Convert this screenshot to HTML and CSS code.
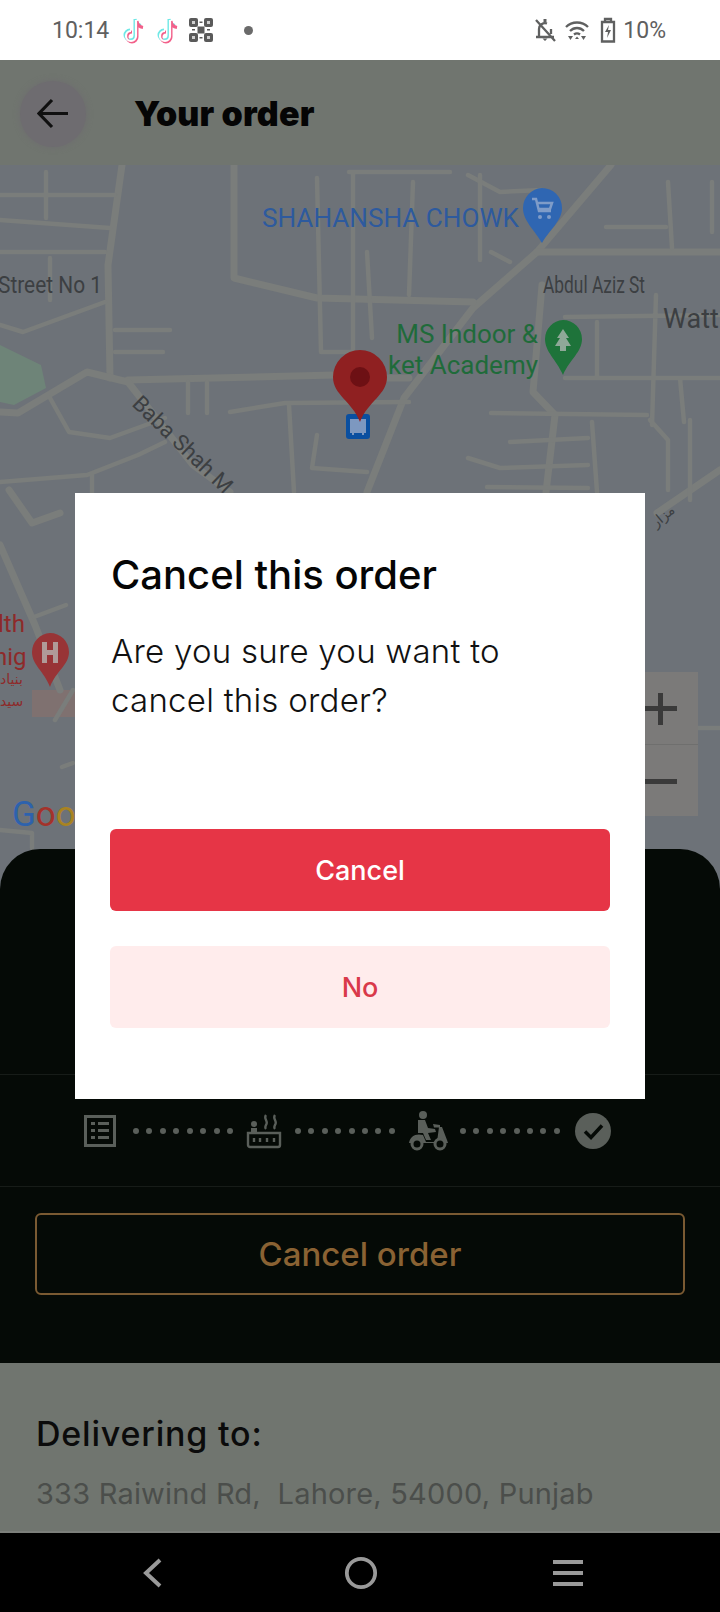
FILE: index.html
```html
<!DOCTYPE html>
<html lang="en">
<head>
<meta charset="utf-8">
<title>Your order</title>
<link rel="stylesheet" href="styles.css">
</head>
<body>
<div class="phone">
  <header class="status">
    <span class="time">10:14</span>
    <svg class="tt" viewBox="0 0 24 28"><path class="tt-c" d="M12 3v16a5 5 0 1 1-5-5M12 3c.5 4 3 6 6 6.500"/><path class="tt-p" d="M14 5v16a5 5 0 1 1-5-5M14 5c.5 4 3 6 6 6.500"/><path class="tt-w" d="M13 4v16a5 5 0 1 1-5-5"/></svg>
    <svg class="tt tt2" viewBox="0 0 24 28"><path class="tt-c" d="M12 3v16a5 5 0 1 1-5-5M12 3c.5 4 3 6 6 6.500"/><path class="tt-p" d="M14 5v16a5 5 0 1 1-5-5M14 5c.5 4 3 6 6 6.500"/><path class="tt-w" d="M13 4v16a5 5 0 1 1-5-5"/></svg>
    <svg class="qr" viewBox="0 0 24 24"><rect x="0" y="0" width="9" height="9" rx="2"/><rect x="15" y="0" width="9" height="9" rx="2"/><rect x="0" y="15" width="9" height="9" rx="2"/><rect x="15" y="15" width="9" height="9" rx="2"/><rect x="8.500" y="8.500" width="7" height="7"/><rect x="10.500" y="3.500" width="3" height="1.500"/><rect x="10.500" y="19" width="3" height="1.500"/><rect x="3" y="11" width="3" height="1.500"/><rect x="18" y="11" width="3" height="1.500"/><rect class="qr-i" x="3" y="3" width="3" height="3"/><rect class="qr-i" x="18" y="3" width="3" height="3"/><rect class="qr-i" x="3" y="18" width="3" height="3"/><rect class="qr-i" x="18" y="18" width="3" height="3"/></svg>
    <span class="dot"></span>
    <span class="grow"></span>
    <svg class="st-ic bell" viewBox="0 0 24 24"><path class="st-line" d="M3 19h18M6 19v-8a6 6 0 0 1 8-5.500M18 11v5M3 2l19 21"/><path class="st-fill" d="M9.500 20.500h5l-2.500 2.500zM10.500 1h3v3.500h-3z"/></svg>
    <svg class="st-ic wifi" viewBox="0 0 24 24"><path class="st-line" d="M1 9c6-6 16-6 22 0M5 13c4-4 10-4 14 0M9 16.500c2-1.500 4-1.500 6 0"/><path class="st-fill" d="M3 18h5l-2.500 4zM16 18h5l-2.500 4zM12 18.500l-2 2.500h4z"/></svg>
    <svg class="st-ic batt" viewBox="0 0 16 26"><path class="st-line" d="M2 5h12v19.500H2zM5 4V2h6v2"/><path class="st-fill" d="M9 8l-4 7h3l-1 6 4-8H8z"/></svg>
    <span class="pct">10%</span>
  </header>

  <div class="stage">
    <div class="appbar">
      <button class="back" aria-label="Back">
        <svg viewBox="0 0 32 32"><path d="M31 15.500H2M15 2L2 15.500 15 29"/></svg>
      </button>
      <h1>Your order</h1>
    </div>

    <div class="map">
      <svg viewBox="0 0 720 724" aria-label="Map">
        <g transform="translate(0 -165)">
          <path class="park" d="M0 345L41 365 46 388 14 405 0 402Z"/>
          <path class="pink" d="M32 690H75V717H32Z"/>
          <g class="roads wide">
            <path d="M611 165L537 252 473 308 404 398 367 492"/>
            <path d="M234 165V278L317 298 473 302"/>
            <path d="M537 252H720"/>
            <path d="M122 165L108 265 110 378"/>
            <path d="M128 380L335 375M387 378H409"/>
            <path d="M0 412L18 413 60 388 87 372 128 382 193 465 230 492"/>
            <path d="M542 285L533 392 555 415 546 492"/>
            <path d="M9 490L32 523 60 513"/>
            <path d="M0 545L35 625 60 690"/>
            <path d="M657 513L720 470"/>
          </g>
          <g class="roads">
            <path d="M0 195H115M0 220L110 228M0 252H105M46 172V218M50 258V300"/>
            <path d="M0 325L23 332 105 302M115 330H170M115 352H163"/>
            <path d="M50 398L69 432 110 438 165 418"/>
            <path d="M317 178L321 352H353M353 172V365M349 172H450M413 182L409 295M367 252L372 338"/>
            <path d="M468 175L500 192 542 190M491 252L510 262M606 227H666M668 182L672 248M712 182V232"/>
            <path d="M565 317L720 315M656 295L652 425M597 322V378M565 378H720M680 378L684 422"/>
            <path d="M491 413L647 415M592 422L597 492M510 442L588 438M468 458L500 468 588 465M487 487L588 488"/>
            <path d="M230 412L285 403 409 402M289 405L294 492M317 435L312 468 367 472M188 382V413M207 382V413"/>
            <path d="M0 482L87 475 138 455 165 442M92 475V495M480 175V260"/>
            <path d="M34 617L66 605M55 720L73 690M62 767L73 763M0 830L32 833V848M698 728H720"/>
            <path d="M650 420L668 440 668 490M690 420V500"/>
          </g>
          <text class="lbl blue" x="262" y="227" textLength="257" lengthAdjust="spacingAndGlyphs">SHAHANSHA CHOWK</text>
          <text class="lbl grey" x="-2" y="293" textLength="104" lengthAdjust="spacingAndGlyphs">Street No 1</text>
          <text class="lbl grey" x="543" y="293" textLength="102" lengthAdjust="spacingAndGlyphs">Abdul Aziz St</text>
          <text class="lbl grey watt" x="663" y="328">Watt</text>
          <text class="lbl green" x="538" y="343" text-anchor="end">MS Indoor &amp;</text>
          <text class="lbl green" x="538" y="374" text-anchor="end">ket Academy</text>
          <text class="lbl grey baba" transform="translate(131 405) rotate(44)">Baba Shah M</text>
          <text class="lbl red" x="-2" y="632">lth</text>
          <text class="lbl red" x="-6" y="665">hig</text>
          <text class="ur red" x="0" y="684">بنیاد</text>
          <text class="ur red" x="0" y="706">سید</text>
          <text class="ur grey" transform="translate(656 528) rotate(-40)">مزار</text>

          <path class="p-blue" d="M542 188a20 20 0 0 1 20 20c0 13-12 21-20 35-8-14-19-22-19-35a20 20 0 0 1 19-20z"/>
          <path class="p-ic" d="M532 199h4l3 12h12M537 203h15l-2 6h-11"/><circle class="p-dot" cx="540" cy="217" r="2"/><circle class="p-dot" cx="549" cy="217" r="2"/>
          <path class="p-green" d="M563 320a19 19 0 0 1 19 19c0 13-12 20-19 36-7-16-18-23-18-36a19 19 0 0 1 18-19z"/>
          <path class="p-tree" d="M563 329l6 9h-3l5 8h-5l0 5h-6v-5h-5l5-8h-3z"/>
          <path class="p-red2" d="M50 633a19 19 0 0 1 19 19c0 13-13 19-19 35-6-16-18-22-18-35a19 19 0 0 1 18-19z"/>
          <path class="p-h" d="M42 642h5v8h6v-8h5v21h-5v-8h-6v8h-5z"/>

          <rect class="bus" x="346" y="414" width="24" height="25" rx="3"/>
          <path class="bus-ic" d="M351 420h14v12h-14zM353 432v3M363 432v3"/>
          <path class="pin" d="M360 350a27 27 0 0 1 27 27c0 18-19 24-27 45-8-21-27-27-27-45a27 27 0 0 1 27-27z"/>
          <circle class="pin-d" cx="360" cy="377" r="10"/>

          <text class="goog"><tspan class="g1" x="12" y="826">G</tspan><tspan class="g2">o</tspan><tspan class="g3">o</tspan></text>
        </g>
      </svg>
      <div class="zoomctl">
        <span class="zbtn"><i class="zh"></i><i class="zv"></i></span>
        <span class="zbtn"><i class="zh"></i></span>
      </div>
    </div>

    <section class="sheet">
      <div class="rule first"></div>
      <div class="stepper">
        <svg class="s-list" viewBox="0 0 32 32"><path class="s-line" d="M1.500 1.500h29v29h-29z"/><path class="s-fill" d="M7 7h4v3H7zM14 7h11v3H14zM7 14h4v3H7zM14 14h11v3H14zM7 21h4v3H7zM14 21h11v3H14z"/></svg>
        <div class="dots"><i></i><i></i><i></i><i></i><i></i><i></i><i></i><i></i></div>
        <svg class="s-pot" viewBox="0 0 36 36"><path class="s-line thin" d="M2 20h32v12a2 2 0 0 1-2 2H4a2 2 0 0 1-2-2zM8 25v4M14 25v4M21 25v4M28 25v4M20 2c-3 4 3 6 0 10-1 2-1 3 0 4M29 2c-3 4 3 6 0 10-1 2-1 3 0 4"/><circle class="s-fill" cx="8" cy="11" r="3"/><path class="s-fill" d="M5 15h6v5H5z"/></svg>
        <div class="dots"><i></i><i></i><i></i><i></i><i></i><i></i><i></i><i></i></div>
        <svg class="s-ride" viewBox="0 0 40 40"><circle class="s-fill" cx="15" cy="4" r="4"/><path class="s-fill" d="M10 9h7l3 8 7 1 1 3-8 1 3 7h-5l-3-7h-5zM25 13l7 1v2.500h-6zM1 32c1-7 7-10 14-8l3 7h11l2-15h3l5 13 1 3H1z"/><circle class="s-ring" cx="9" cy="33" r="5"/><circle class="s-ring" cx="32" cy="33" r="5"/></svg>
        <div class="dots"><i></i><i></i><i></i><i></i><i></i><i></i><i></i><i></i></div>
        <svg class="s-check" viewBox="0 0 36 36"><circle class="s-fill" cx="18" cy="18" r="18"/><path class="s-tick" d="M10 18.500l6 6 11-12"/></svg>
      </div>
      <div class="rule"></div>
      <button class="btn-outline">Cancel order</button>
    </section>

    <section class="deliver">
      <h2>Delivering to:</h2>
      <p>333 Raiwind Rd,&nbsp; Lahore, 54000, Punjab</p>
    </section>

    <div class="dialog" role="dialog">
      <h3>Cancel this order</h3>
      <p>Are you sure you want to<br>cancel this order?</p>
      <button class="btn btn-primary">Cancel</button>
      <button class="btn btn-soft">No</button>
    </div>
  </div>

  <nav class="navbar">
    <svg class="n-back" viewBox="0 0 20 30"><path d="M17 2L3 15l14 13"/></svg>
    <svg class="n-home" viewBox="0 0 36 36"><circle cx="18" cy="18" r="15"/></svg>
    <svg class="n-menu" viewBox="0 0 34 26"><path d="M2 2h30M2 13h30M2 24h30"/></svg>
  </nav>
</div>
</body>
</html>
```
FILE: styles.css
```css
* { box-sizing: border-box; margin: 0; padding: 0; }
html, body { width: 720px; height: 1612px; overflow: hidden; }
body { font-family: "Inter", "Liberation Sans", sans-serif; background: #000; }
button { font: inherit; border: 0; background: none; }
.phone { width: 720px; height: 1612px; display: flex; flex-direction: column; }

/* status bar */
.status { height: 60px; background: #fff; display: flex; align-items: center; padding: 0 54px 0 52px; color: #5f6060; flex: none; }
.time { font: 400 23px "Roboto", sans-serif; width: 71px; }
.tt { width: 24px; height: 28px; fill: none; stroke-width: 3; margin-right: 10px; }
.tt2 { margin-right: 8px; }
.tt-c { stroke: #6fe8e6; }
.tt-p { stroke: #f2608a; }
.tt-w { stroke: #fff; stroke-width: 2.200; }
.qr { width: 24px; height: 24px; fill: #5a5a5a; }
.qr-i { fill: #cfcfcf; }
.dot { width: 9px; height: 9px; border-radius: 50%; background: #6a6a6a; margin-left: 31px; }
.grow { flex: 1; }
.st-ic { width: 22px; height: 26px; margin-right: 8px; }
.bell { width: 24px; }
.wifi { width: 24px; }
.batt { width: 16px; height: 26px; margin-left: 3px; margin-right: 7px; }
.st-line { fill: none; stroke: #5f6060; stroke-width: 2.300; }
.st-fill { fill: #5f6060; }
.pct { font: 400 23px "Roboto", sans-serif; }

/* dimmed app */
.stage { position: relative; flex: none; height: 1473px; background: #70756f; display: flex; flex-direction: column; overflow: hidden; }
.appbar { height: 105px; flex: none; display: flex; align-items: center; padding-left: 20px; }
.back { width: 66px; height: 66px; border-radius: 50%; background: #6e6c70; box-shadow: 0 0 6px #6e6c70; display: flex; align-items: center; justify-content: center; margin-top: 2px; }
.back svg { width: 32px; height: 32px; fill: none; stroke: #101010; stroke-width: 3.200; }
h1 { font: 900 34px "Inter", sans-serif; color: #050505; margin-left: 48px; margin-top: 2px; letter-spacing: .2px; white-space: nowrap; }

.map { position: relative; height: 724px; flex: none; background: #6d7278; }
.map > svg { display: block; width: 720px; height: 724px; }
.park { fill: #6e8478; }
.pink { fill: #7f7170; }
.roads { fill: none; stroke: #7a7d7b; stroke-width: 4.500; stroke-linecap: round; stroke-linejoin: round; }
.wide { stroke-width: 7; }
.lbl { font-family: "Roboto", sans-serif; font-size: 24px; }
.blue { fill: #2d5a9e; font-size: 26px; }
.grey { fill: #3c3f42; }
.watt { font-size: 27px; }
.baba { font-size: 22px; }
.green { fill: #1f6b3a; font-size: 26px; }
.red { fill: #8e2a2a; }
.ur { font-family: "DejaVu Sans", sans-serif; font-size: 14px; }
.p-blue { fill: #2f66b2; }
.p-ic { fill: none; stroke: #7f9cc8; stroke-width: 2.500; }
.p-dot { fill: #7f9cc8; }
.p-green { fill: #1e733a; }
.p-tree { fill: #8fa898; }
.p-red2 { fill: #983436; }
.p-h { fill: #b09b98; }
.bus { fill: #0a4fa0; }
.bus-ic { fill: #7d98c0; stroke: #7d98c0; stroke-width: 2; }
.pin { fill: #8f2021; }
.pin-d { fill: #6d1014; }
.goog { font: 400 35px "Roboto", sans-serif; }
.g1 { fill: #2d62ad; }
.g2 { fill: #a4322a; }
.g3 { fill: #a98321; }
.zoomctl { position: absolute; left: 625px; top: 507px; width: 73px; height: 144px; background: #7b7a79; display: flex; flex-direction: column; }
.zbtn { flex: 1; position: relative; }
.zbtn + .zbtn { border-top: 1px solid #6f6f6e; }
.zh { position: absolute; right: 21px; top: 34px; width: 36px; height: 5px; background: #3a3a3a; }
.zv { position: absolute; right: 35px; top: 21px; width: 5px; height: 32px; background: #3a3a3a; }

.sheet { flex: none; height: 514px; margin-top: -40px; padding-top: 225px; background: #050a06; border-radius: 40px 40px 0 0; position: relative; display: flex; flex-direction: column; }
.rule { height: 1px; background: #171c18; flex: none; }
.stepper { height: 111px; display: flex; align-items: center; padding-left: 84px; flex: none; }
.s-line { fill: none; stroke: #5a5f5a; stroke-width: 3; }
.thin { stroke-width: 2.400; }
.s-fill { fill: #5a5f5a; }
.s-ring { fill: #050a06; stroke: #5a5f5a; stroke-width: 3; }
.s-tick { fill: none; stroke: #050a06; stroke-width: 3.500; }
.s-list { width: 32px; height: 32px; margin-right: 4px; }
.s-pot { width: 36px; height: 36px; }
.s-ride { width: 40px; height: 40px; margin-left: 0; margin-right: -1px; }
.s-check { width: 36px; height: 36px; margin-left: 2px; }
.dots { display: flex; gap: 7.430px; margin: 0 13px; flex: none; }
.dots i { width: 6px; height: 6px; border-radius: 50%; background: #5a5f5a; }
.btn-outline { margin: 26px 35px 0 35px; height: 82px; border: 2px solid #7a5a32; border-radius: 6px; color: #8a6233; font: 500 33px "Inter", sans-serif; flex: none; }

.deliver { flex: 1; padding: 51px 36px 0; border-bottom: 2px solid #7c7f7b; }
h2 { font: 500 34px "Inter", sans-serif; letter-spacing: .8px; color: #0b0b0b; line-height: 40px; white-space: nowrap; }
.deliver p { font: 400 29px "Inter", sans-serif; letter-spacing: .2px; color: #4b4e4b; line-height: 40px; margin-top: 20px; white-space: nowrap; }

/* dialog */
.dialog { position: absolute; left: 75px; top: 433px; width: 570px; height: 606px; background: #fff; padding: 56px 35px 0 36px; display: flex; flex-direction: column; }
.dialog h3 { font: 500 40px/52px "Inter", sans-serif; letter-spacing: 0; color: #050505; white-space: nowrap; }
.dialog p { font: 300 33px/49px "Inter", sans-serif; letter-spacing: .25px; color: #111; margin-top: 26px; height: 202px; }
.btn { height: 82px; border-radius: 6px; font: 500 27px "Inter", sans-serif; flex: none; width: 500px; margin-left: -1px; }
.btn-primary { background: #e63546; color: #fff; }
.btn-soft { background: #ffecec; color: #d9394a; margin-top: 35px; }

/* nav bar */
.navbar { flex: 1; background: #000; position: relative; display: flex; align-items: center; padding-left: 143px; }
.navbar svg { fill: none; stroke: #999; }
.n-back { width: 20px; height: 30px; stroke-width: 4; }
.n-home { width: 34px; height: 34px; stroke-width: 4; margin-left: 181px; }
.n-menu { width: 34px; height: 26px; stroke-width: 4; margin-left: 173px; }
```
